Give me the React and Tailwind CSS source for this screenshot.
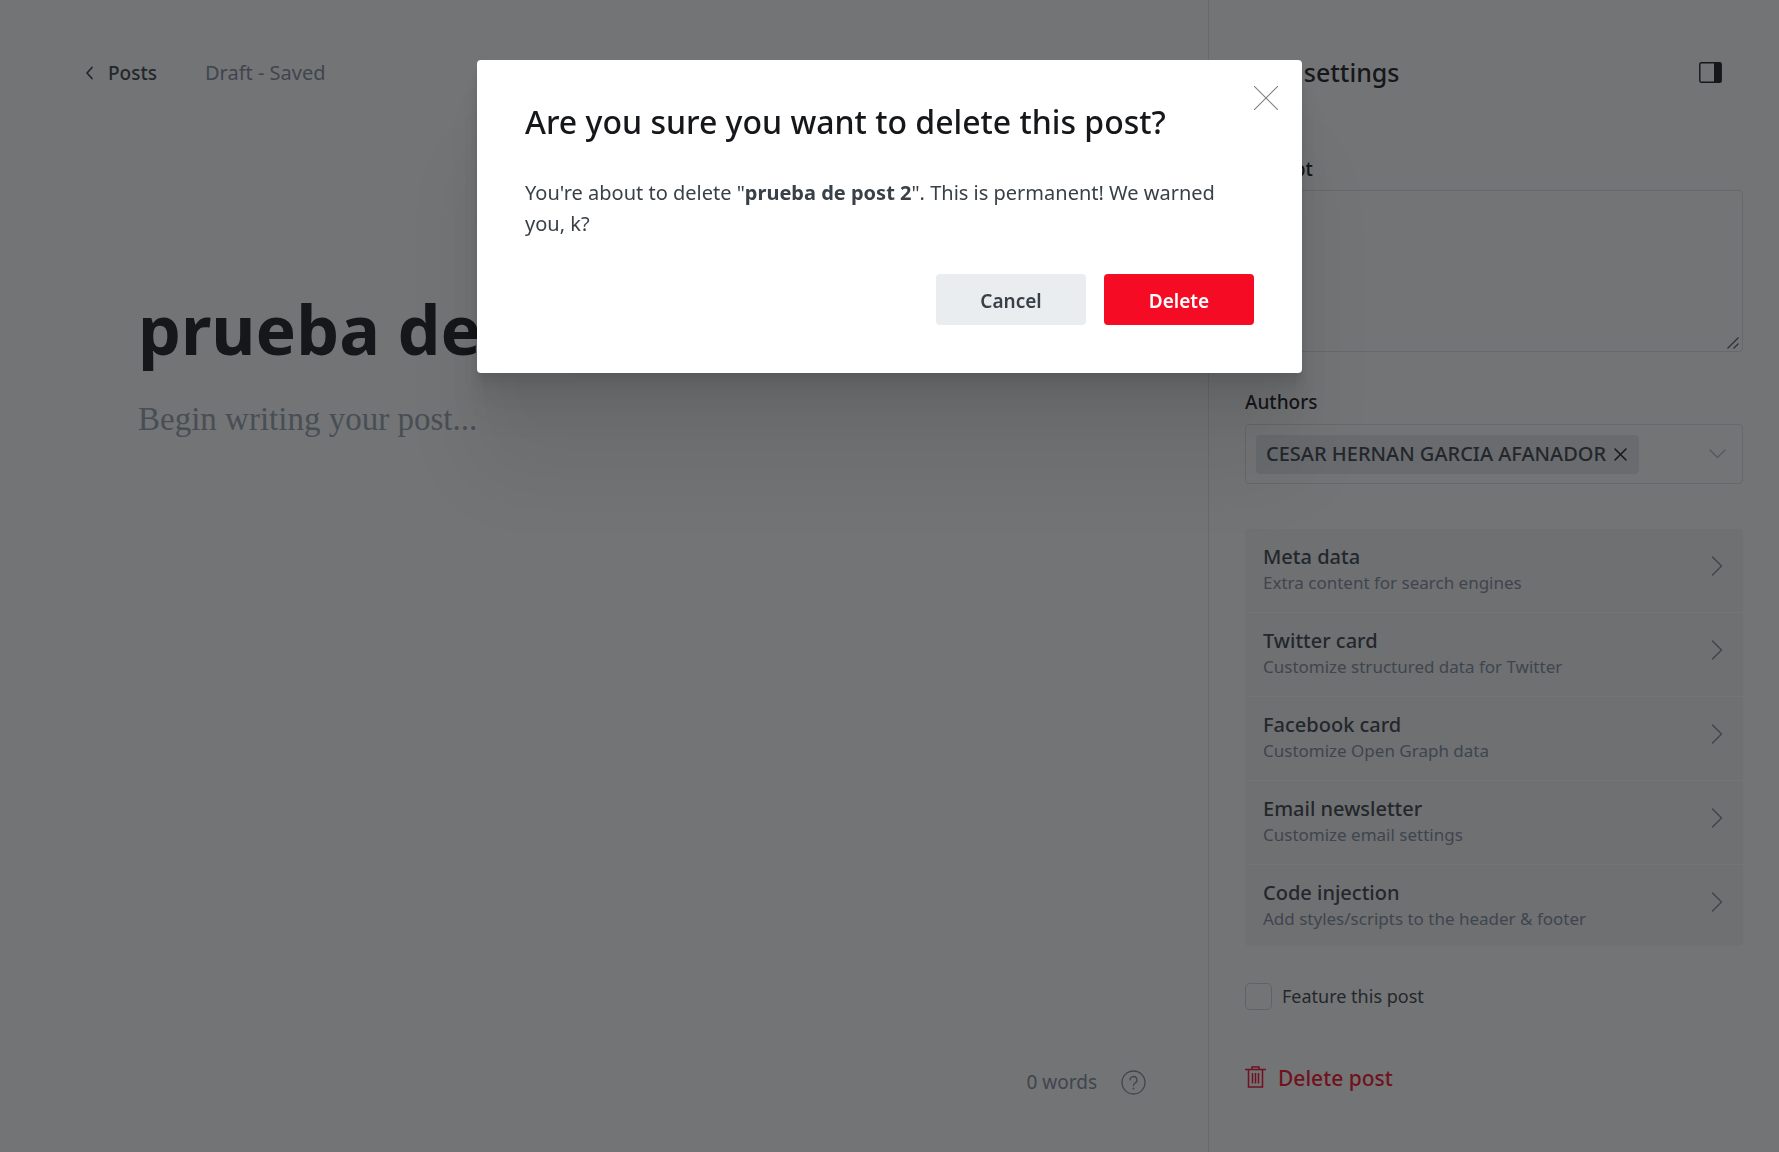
import React from "react";

const settings = [
  { title: "Meta data", text: "Extra content for search engines" },
  { title: "Twitter card", text: "Customize structured data for Twitter" },
  { title: "Facebook card", text: "Customize Open Graph data" },
  { title: "Email newsletter", text: "Customize email settings" },
  { title: "Code injection", text: "Add styles/scripts to the header & footer" },
];

function Editor() {
  return (
    <main className="flex min-w-0 flex-1 flex-col">
      <header className="flex items-center gap-12 px-[85px] pt-[58px] text-[19px] leading-[30px]">
        <a href="#posts" className="flex items-center gap-[14px] font-medium text-[#394047]">
          <svg width="9" height="14" viewBox="0 0 9 14" fill="none" stroke="currentColor" strokeWidth="1.8" strokeLinecap="round" strokeLinejoin="round" aria-hidden="true">
            <path d="M7 1.5 2 7l5 5.500" />
          </svg>
          Posts
        </a>
        <span className="text-[20px] text-[#7c8b9a]">Draft - Saved</span>
      </header>
      <article className="flex-1 px-[138px] pt-[193px]">
        <h1 className="overflow-hidden text-[68px] font-bold leading-[96px] whitespace-nowrap text-[#15171a]">
          prueba de post 2
        </h1>
        <p className="mt-[18px] font-['Liberation_Serif',serif] text-[33px] leading-[48px] text-[#95a1ad]">
          Begin writing your post...
        </p>
      </article>
      <footer className="flex items-center justify-end gap-6 px-[62px] pb-[54px] text-[19px] leading-[32px] text-[#7c8b9a]">
        <span>0 words</span>
        <button type="button" aria-label="Help">
          <svg width="25" height="25" viewBox="0 0 25 25" fill="none" stroke="currentColor" strokeWidth="1.300" strokeLinecap="round" strokeLinejoin="round">
            <circle cx="12.500" cy="12.500" r="11.500" />
            <path d="M9 10a3.500 3.500 0 1 1 5 3.200c-1 .5-1.500 1-1.500 2.300" />
            <path d="M12.500 18.500v.2" strokeWidth="1.800" />
          </svg>
        </button>
      </footer>
    </main>
  );
}

function Sidebar() {
  return (
    <aside className="flex w-[571px] shrink-0 flex-col border-l border-[#e1e5e9] px-9 pt-[53px]">
      <div className="flex items-center justify-between pr-[21px]">
        <h2 className="text-[25px] font-medium leading-[38px] text-[#15171a]">Post settings</h2>
        <button type="button" aria-label="Toggle settings" className="text-[#15171a]">
          <svg width="23" height="21" viewBox="0 0 23 21" aria-hidden="true">
            <rect x=".8" y=".8" width="21.400" height="19.400" rx="1.500" fill="none" stroke="currentColor" strokeWidth="1.400" />
            <path d="M15 1h7v19h-7z" fill="currentColor" />
          </svg>
        </button>
      </div>
      <label htmlFor="excerpt" className="mt-[64px] text-[19px] font-medium leading-[28px] text-[#15171a]">Excerpt</label>
      <div className="relative mt-[7px] flex">
        <textarea id="excerpt" className="h-[162px] w-full resize-none rounded-[4px] border border-[#dde1e5] bg-transparent p-3" />
        <svg className="absolute right-1 bottom-[3px]" width="12" height="12" viewBox="0 0 12 12" stroke="#4f5357" strokeWidth="1.300" aria-hidden="true">
          <path d="M.5 11.500l11-11M6.500 11.500l5-5" />
        </svg>
      </div>
      <label htmlFor="authors" className="mt-9 text-[19px] font-medium leading-[28px] text-[#15171a]">Authors</label>
      <div className="mt-2 flex h-[60px] items-center justify-between rounded-[4px] border border-[#dde1e5] pr-4 pl-[10px]">
        <span className="flex h-[39px] items-center gap-2 rounded-[4px] bg-[#e5e9ed] pr-3 pl-[10px] text-[20px] font-medium text-[#394047]">
          CESAR HERNAN GARCIA AFANADOR
          <button type="button" aria-label="Remove author">
            <svg width="13" height="13" viewBox="0 0 13 13" stroke="#15171a" strokeWidth="1.500" strokeLinecap="round">
              <path d="m1 1 11 11M12 1 1 12" />
            </svg>
          </button>
        </span>
        <button type="button" id="authors" aria-label="Authors">
          <svg width="17" height="10" viewBox="0 0 17 10" fill="none" stroke="#aeb7c1" strokeWidth="1.200" strokeLinecap="round" strokeLinejoin="round">
            <path d="m1 1 7.500 7.500L16 1" />
          </svg>
        </button>
      </div>
      <nav className="mt-[45px] divide-y divide-white overflow-hidden rounded-[4px] bg-[#f4f5f6]">
        {settings.map((item) => (
          <button key={item.title} type="button" className="flex w-full items-start justify-between pt-[15px] pr-5 pb-4 pl-[18px] text-left last:pb-[14px]">
            <span className="flex flex-col">
              <span className="text-[20px] font-medium leading-[26px] text-[#394047]">{item.title}</span>
              <span className="text-[17px] leading-[26px] text-[#7c8b9a]">{item.text}</span>
            </span>
            <svg className="mt-3" width="12" height="20" viewBox="0 0 12 20" fill="none" stroke="#7c8b9a" strokeWidth="1.500" strokeLinecap="round" strokeLinejoin="round" aria-hidden="true">
              <path d="m1.500 1 9 9-9 9" />
            </svg>
          </button>
        ))}
      </nav>
      <label className="mt-9 flex items-center gap-[10px] text-[18px] leading-[28px] text-[#394047]">
        <input type="checkbox" className="size-[27px] appearance-none rounded-[5px] border border-[#ced4d9]" />
        Feature this post
      </label>
      <button type="button" className="mt-[52px] flex items-start gap-3 self-start text-[21px] font-medium leading-[32px] text-[#f50b23]">
        <svg className="mt-1" width="21" height="22" viewBox="0 0 21 22" fill="none" stroke="currentColor" strokeWidth="1.500" aria-hidden="true">
          <path d="M0 3.500h21M7 3V1h7v2M3.500 4v17h14V4M7.500 7v10.500M10.500 7v10.500M13.500 7v10.500" />
        </svg>
        Delete post
      </button>
    </aside>
  );
}

function DeleteDialog() {
  return (
    <div className="fixed inset-0 flex items-start justify-center bg-[#15171a]/60 pt-[60px]">
      <section
        role="dialog"
        aria-modal="true"
        aria-labelledby="dialog-title"
        className="relative w-[825px] max-w-full rounded-[4px] bg-white px-12 pt-9 pb-12 shadow-[0_3px_2px_rgba(0,0,0,0.02),0_7px_5px_rgba(0,0,0,0.03),0_12px_10px_rgba(0,0,0,0.035),0_22px_18px_rgba(0,0,0,0.042),0_42px_33px_rgba(0,0,0,0.05),0_100px_80px_rgba(0,0,0,0.07)]"
      >
        <button type="button" aria-label="Close" className="absolute top-[26px] right-6">
          <svg width="24" height="24" viewBox="0 0 24 24" stroke="#7d7f82" strokeWidth="1.100" aria-hidden="true">
            <path d="m0 0 24 24M24 0 0 24" />
          </svg>
        </button>
        <h1 id="dialog-title" className="text-[32px] font-medium leading-[52px] text-[#15171a]">
          Are you sure you want to delete this post?
        </h1>
        <p className="mt-[29px] text-[20px] leading-[31px] text-[#394047]">
          You're about to delete "<strong className="font-bold">prueba de post 2</strong>". This is permanent! We warned you, k?
        </p>
        <div className="mt-[35px] flex justify-end gap-[18px] text-[19px] font-semibold">
          <button type="button" className="h-[51px] w-[150px] rounded-[4px] bg-[#e9edf0] pt-[3px] text-[#394047]">Cancel</button>
          <button type="button" className="h-[51px] w-[150px] rounded-[4px] bg-[#f50b23] pt-[3px] text-white">Delete</button>
        </div>
      </section>
    </div>
  );
}

export default function App() {
  return (
    <div className="flex min-h-screen bg-white font-['Noto_Sans','Open_Sans',sans-serif]">
      <Editor />
      <Sidebar />
      <DeleteDialog />
    </div>
  );
}
